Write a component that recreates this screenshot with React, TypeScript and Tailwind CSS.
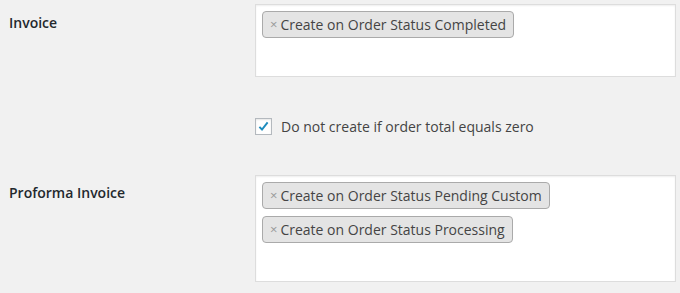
const Tag = ({ label }: { label: string }) => (
  <li className="flex items-center h-[27px] px-[7px] rounded-[4px] border border-[#aaa] bg-[#e4e4e4] text-[14px] text-[#444] leading-none">
    <span className="text-[#999] text-[13px] mr-[3px]">×</span>
    {label}
  </li>
);

const TagBox = ({ tags, height }: { tags: string[]; height: string }) => (
  <ul className={`flex flex-col items-start gap-[7px] w-[421px] ${height} bg-white border border-[#ddd] pt-[6px] pl-[6px] shadow-[inset_0_1px_2px_rgba(0,0,0,0.07)]`}>
    {tags.map((t) => (
      <Tag key={t} label={t} />
    ))}
  </ul>
);

export default function App() {
  return (
    <div className="w-[680px] h-[293px] bg-[#f1f1f1] text-[#23282d] font-['Open_Sans',sans-serif] overflow-hidden">
      {/* Invoice */}
      <div className="flex pt-[4px]">
        <div className="w-[255px] pl-[9px] pt-[8px] text-[14px] font-semibold">Invoice</div>
        <TagBox tags={['Create on Order Status Completed']} height="h-[73px]" />
      </div>

      {/* zero total option */}
      <div className="flex pl-[255px] mt-[40px] items-center h-[18px]">
        <label className="flex items-center gap-[9px] text-[14px] text-[#444]">
          <span className="flex items-center justify-center w-[17px] h-[17px] bg-white border border-[#b4b9be] shadow-[inset_0_1px_2px_rgba(0,0,0,0.1)]">
            <svg viewBox="0 0 20 20" className="w-[17px] h-[17px]">
              <path d="M4.5 10.5 L8 14 L15.5 4.5" fill="none" stroke="#1e8cbe" strokeWidth="2.6" />
            </svg>
          </span>
          Do not create if order total equals zero
        </label>
      </div>

      {/* Proforma Invoice */}
      <div className="flex mt-[40px]">
        <div className="w-[255px] pl-[9px] pt-[7px] text-[14px] font-semibold">Proforma Invoice</div>
        <TagBox
          tags={['Create on Order Status Pending Custom', 'Create on Order Status Processing']}
          height="h-[107px]"
        />
      </div>
    </div>
  );
}
